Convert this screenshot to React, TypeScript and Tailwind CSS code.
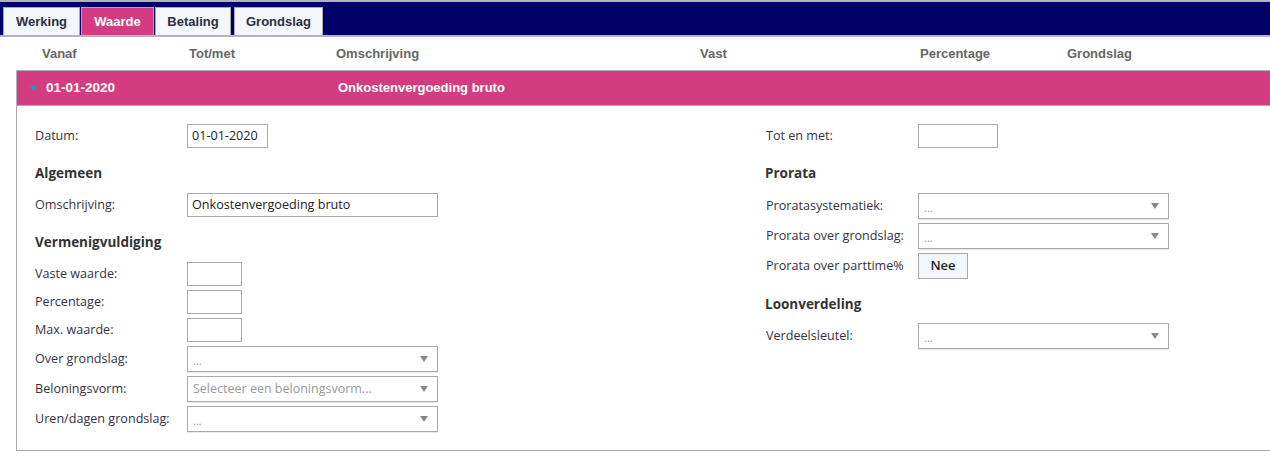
import React from "react";

const Label = ({ children }: { children: React.ReactNode }) => (
  <div className="w-[152px] shrink-0 text-[12.6px] text-[#35323f] leading-[16px]">{children}</div>
);

const TextInput = ({ w, value }: { w: string; value?: string }) => (
  <div className={`${w} h-[24px] border border-[#a9a9a9] bg-white px-[4px] flex items-center text-[12.6px] text-[#222]`}>
    {value}
  </div>
);

const Select = ({ placeholder }: { placeholder: string }) => (
  <div className="w-[251px] h-[26px] border border-[#a9a9a9] bg-white pl-[5px] pr-[9px] flex items-center justify-between text-[12.5px] text-[#9a9a9a] shadow-[0_1px_1px_rgba(0,0,0,0.08)]">
    <span className={placeholder === "..." ? "text-[11px] pt-[4px]" : ""}>{placeholder}</span>
    <svg width="8" height="6" viewBox="0 0 8 6">
      <path d="M0 0 L8 0 L4 6 Z" fill="#888" />
    </svg>
  </div>
);

const Heading = ({ children, cls }: { children: React.ReactNode; cls: string }) => (
  <div className={`${cls} text-[13.5px] font-bold text-[#333] leading-[20px]`}>{children}</div>
);

export default function App() {
  return (
    <div className="w-[1270px] h-[465px] bg-white overflow-hidden" style={{ fontFamily: '"Open Sans", sans-serif' }}>
      <div className="h-[2px] bg-[#b4b4b4]" />
      <div className="h-[35px] bg-[#000066] flex items-end pl-[3px] border-b-2 border-[#b3b3c3]" style={{ fontFamily: '"Liberation Sans", Arial, sans-serif' }}>
        <div className="w-[77px] h-[28px] mr-[1px] bg-[#f3f6fa] border border-b-0 border-[#a8a8b0] flex items-center justify-center text-[13px] font-bold text-[#2e2e3e]">Werking</div>
        <div className="w-[73px] h-[28px] mr-[1px] bg-[#d33d80] border border-b-0 border-[#a8a8b0] flex items-center justify-center text-[13px] font-bold text-white">Waarde</div>
        <div className="w-[76px] h-[28px] mr-[3px] bg-[#f3f6fa] border border-b-0 border-[#a8a8b0] flex items-center justify-center text-[13px] font-bold text-[#2e2e3e]">Betaling</div>
        <div className="w-[89px] h-[28px] bg-[#f3f6fa] border border-b-0 border-[#a8a8b0] flex items-center justify-center text-[13px] font-bold text-[#2e2e3e]">Grondslag</div>
      </div>
      <div className="h-[33px] flex items-center pl-[42px] text-[13px] font-bold text-[#666]" style={{ fontFamily: '"Liberation Sans", Arial, sans-serif' }}>
        <div className="w-[147px]">Vanaf</div>
        <div className="w-[147px]">Tot/met</div>
        <div className="w-[364px]">Omschrijving</div>
        <div className="w-[220px]">Vast</div>
        <div className="w-[147px]">Percentage</div>
        <div>Grondslag</div>
      </div>
      <div className="ml-[16px] h-[36px] bg-[#d33d80] border-t border-b border-l border-[#b0b0b8] flex items-center font-bold text-white" style={{ fontFamily: '"Liberation Sans", Arial, sans-serif' }}>
        <svg className="ml-[12px] mr-[8px]" width="9" height="5" viewBox="0 0 9 5">
          <path d="M0 0 L9 0 L4.5 5 Z" fill="#3a86c8" />
        </svg>
        <div className="w-[292px] text-[13.5px]">01-01-2020</div>
        <div className="text-[13px]">Onkostenvergoeding bruto</div>
      </div>
      <div className="ml-[16px] h-[345px] border-l border-b border-[#a9a9a9] flex pl-[18px] pt-[18px]">
        <div className="w-[730px] flex flex-col">
          <div className="flex items-center h-[24px]">
            <Label>Datum:</Label>
            <TextInput w="w-[81px]" value="01-01-2020" />
          </div>
          <Heading cls="mt-[15px] mb-[10px]">Algemeen</Heading>
          <div className="flex items-center h-[24px]">
            <Label>Omschrijving:</Label>
            <TextInput w="w-[251px]" value="Onkostenvergoeding bruto" />
          </div>
          <Heading cls="mt-[15px] mb-[10px]">Vermenigvuldiging</Heading>
          <div className="flex flex-col gap-[4px]">
            <div className="flex items-center h-[24px]">
              <Label>Vaste waarde:</Label>
              <TextInput w="w-[55px]" />
            </div>
            <div className="flex items-center h-[24px]">
              <Label>Percentage:</Label>
              <TextInput w="w-[55px]" />
            </div>
            <div className="flex items-center h-[24px]">
              <Label>Max. waarde:</Label>
              <TextInput w="w-[55px]" />
            </div>
            <div className="flex items-center h-[26px]">
              <Label>Over grondslag:</Label>
              <Select placeholder="..." />
            </div>
            <div className="flex items-center h-[26px]">
              <Label>Beloningsvorm:</Label>
              <Select placeholder="Selecteer een beloningsvorm..." />
            </div>
            <div className="flex items-center h-[26px]">
              <Label>Uren/dagen grondslag:</Label>
              <Select placeholder="..." />
            </div>
          </div>
        </div>
        <div className="flex flex-col">
          <div className="flex items-center h-[24px]">
            <Label>
              <span className="pl-[1px]">Tot en met:</span>
            </Label>
            <div className="ml-[1px]">
              <TextInput w="w-[80px]" />
            </div>
          </div>
          <Heading cls="mt-[15px] mb-[10px]">Prorata</Heading>
          <div className="flex flex-col gap-[4px] pl-[1px]">
            <div className="flex items-center h-[26px]">
              <Label>Proratasystematiek:</Label>
              <Select placeholder="..." />
            </div>
            <div className="flex items-center h-[26px]">
              <Label>Prorata over grondslag:</Label>
              <Select placeholder="..." />
            </div>
            <div className="flex items-center h-[26px]">
              <Label>Prorata over parttime%</Label>
              <div className="w-[50px] h-[26px] bg-[#f3f6fa] border border-[#a9a9a9] flex items-center justify-center text-[13px] font-semibold text-[#222]">Nee</div>
            </div>
          </div>
          <Heading cls="mt-[15px] mb-[9px]">Loonverdeling</Heading>
          <div className="flex items-center h-[26px] pl-[1px]">
            <Label>Verdeelsleutel:</Label>
            <Select placeholder="..." />
          </div>
        </div>
      </div>
    </div>
  );
}
